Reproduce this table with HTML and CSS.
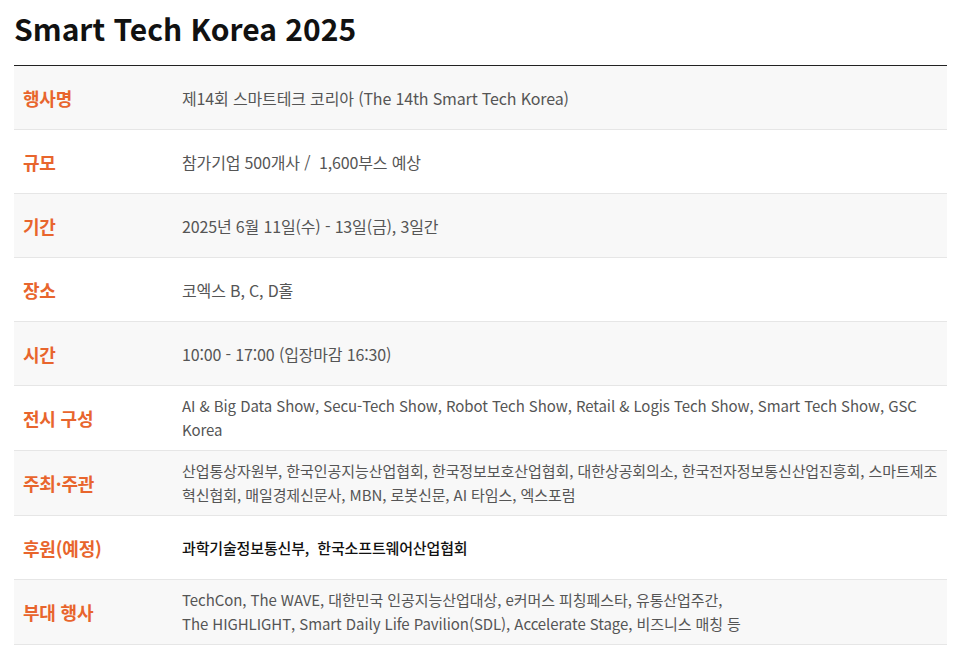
FILE: index.html
```html
<!DOCTYPE html>
<html lang="ko">
<head>
<meta charset="utf-8">
<title>Smart Tech Korea 2025</title>
<link rel="stylesheet" href="styles.css">
</head>
<body>
<div class="page">
  <h1 class="title">Smart Tech Korea 2025</h1>
  <div class="info">
    <div class="row alt"><div class="label">행사명</div><div class="value">제14회 스마트테크 코리아 (The 14th Smart Tech Korea)</div></div>
    <div class="row"><div class="label">규모</div><div class="value">참가기업 500개사 /&nbsp; 1,600부스 예상</div></div>
    <div class="row alt"><div class="label">기간</div><div class="value">2025년 6월 11일(수) - 13일(금), 3일간</div></div>
    <div class="row"><div class="label">장소</div><div class="value">코엑스 B, C, D홀</div></div>
    <div class="row alt"><div class="label">시간</div><div class="value">10:00 - 17:00 (입장마감 16:30)</div></div>
    <div class="row"><div class="label">전시 구성</div><div class="value small">AI &amp; Big Data Show, Secu-Tech Show, Robot Tech Show, Retail &amp; Logis Tech Show, Smart Tech Show, GSC Korea</div></div>
    <div class="row alt"><div class="label">주최·주관</div><div class="value small">산업통상자원부, 한국인공지능산업협회, 한국정보보호산업협회, 대한상공회의소, 한국전자정보통신산업진흥회, 스마트제조혁신협회, 매일경제신문사, MBN, 로봇신문, AI 타임스, 엑스포럼</div></div>
    <div class="row"><div class="label">후원(예정)</div><div class="value strong">과학기술정보통신부,&nbsp; 한국소프트웨어산업협회</div></div>
    <div class="row alt"><div class="label">부대 행사</div><div class="value small">TechCon, The WAVE, 대한민국 인공지능산업대상, e커머스 피칭페스타, 유통산업주간,<br>The HIGHLIGHT, Smart Daily Life Pavilion(SDL), Accelerate Stage, 비즈니스 매칭 등</div></div>
  </div>
</div>
</body>
</html>
```
FILE: styles.css
```css
html, body {
  margin: 0;
  padding: 0;
  background: #ffffff;
}
body {
  font-family: "Noto Sans CJK KR", "Noto Sans", sans-serif;
}
.page {
  padding: 0 13px 0 14px;
}
.title {
  margin: 0;
  padding-top: 6px;
  height: 65px;
  box-sizing: border-box;
  font-size: 30px;
  line-height: 44px;
  font-weight: 700;
  color: #111111;
  letter-spacing: 0;
}
.info {
  border-top: 1px solid #222222;
}
.row {
  display: grid;
  grid-template-columns: 168px 1fr;
  min-height: 63px;
  border-bottom: 1px solid #e6e6e6;
  background: #ffffff;
}
.row.alt {
  background: #f8f8f8;
}
.label {
  display: flex;
  align-items: center;
  padding-left: 9px;
  font-size: 18px;
  font-weight: 700;
  color: #e8652d;
  letter-spacing: -0.2px;
}
.value {
  display: flex;
  align-items: center;
  padding: 8px 4px 8px 0;
  font-size: 16px;
  line-height: 24px;
  color: #555555;
  letter-spacing: -0.15px;
}
.value.small {
  font-size: 15px;
  letter-spacing: -0.07px;
}
.value.strong {
  color: #111111;
  font-weight: 500;
  font-size: 15px;
}
```
